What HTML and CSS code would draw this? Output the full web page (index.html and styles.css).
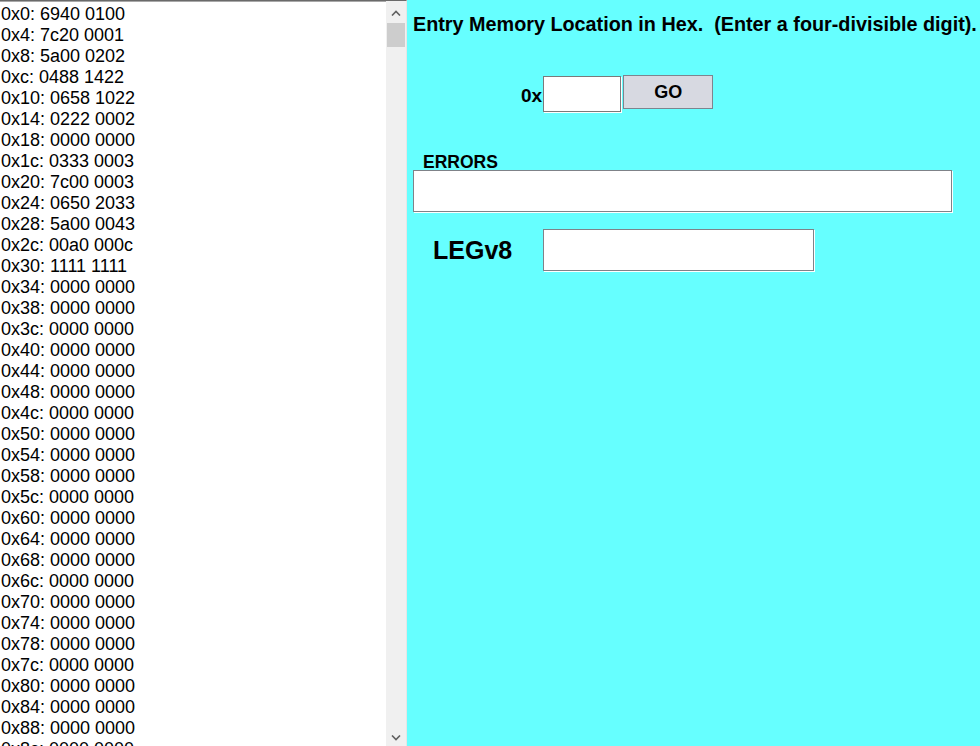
FILE: index.html
```html
<!DOCTYPE html>
<html>
<head>
<meta charset="utf-8">
<link rel="stylesheet" href="styles.css">
</head>
<body>
<div class="page">
  <div class="memory">
    <div class="mem-list">
      <div class="row">0x0: 6940 0100</div>
      <div class="row">0x4: 7c20 0001</div>
      <div class="row">0x8: 5a00 0202</div>
      <div class="row">0xc: 0488 1422</div>
      <div class="row">0x10: 0658 1022</div>
      <div class="row">0x14: 0222 0002</div>
      <div class="row">0x18: 0000 0000</div>
      <div class="row">0x1c: 0333 0003</div>
      <div class="row">0x20: 7c00 0003</div>
      <div class="row">0x24: 0650 2033</div>
      <div class="row">0x28: 5a00 0043</div>
      <div class="row">0x2c: 00a0 000c</div>
      <div class="row">0x30: 1111 1111</div>
      <div class="row">0x34: 0000 0000</div>
      <div class="row">0x38: 0000 0000</div>
      <div class="row">0x3c: 0000 0000</div>
      <div class="row">0x40: 0000 0000</div>
      <div class="row">0x44: 0000 0000</div>
      <div class="row">0x48: 0000 0000</div>
      <div class="row">0x4c: 0000 0000</div>
      <div class="row">0x50: 0000 0000</div>
      <div class="row">0x54: 0000 0000</div>
      <div class="row">0x58: 0000 0000</div>
      <div class="row">0x5c: 0000 0000</div>
      <div class="row">0x60: 0000 0000</div>
      <div class="row">0x64: 0000 0000</div>
      <div class="row">0x68: 0000 0000</div>
      <div class="row">0x6c: 0000 0000</div>
      <div class="row">0x70: 0000 0000</div>
      <div class="row">0x74: 0000 0000</div>
      <div class="row">0x78: 0000 0000</div>
      <div class="row">0x7c: 0000 0000</div>
      <div class="row">0x80: 0000 0000</div>
      <div class="row">0x84: 0000 0000</div>
      <div class="row">0x88: 0000 0000</div>
      <div class="row">0x8c: 0000 0000</div>
      <div class="row">0x90: 0000 0000</div>
    </div>
    <div class="scrollbar">
      <div class="arrow">
        <svg width="10" height="6" viewBox="0 0 10 6"><path d="M1 5.5 L5 1.5 L9 5.5" fill="none" stroke="#606060" stroke-width="1.6"/></svg>
      </div>
      <div class="thumb"></div>
      <div class="track"></div>
      <div class="arrow arrow-down">
        <svg width="10" height="6" viewBox="0 0 10 6"><path d="M1 0.5 L5 4.5 L9 0.5" fill="none" stroke="#606060" stroke-width="1.6"/></svg>
      </div>
    </div>
  </div>
  <div class="panel">
    <div class="title">Entry Memory Location in Hex.&nbsp; (Enter a four-divisible digit).</div>
    <div class="entry">
      <span class="prefix">0x</span>
      <input class="hex-input" type="text">
      <button class="go">GO</button>
    </div>
    <div class="errors-label">ERRORS</div>
    <div class="box errors-box"></div>
    <div class="leg">
      <span class="leg-label">LEGv8</span>
      <div class="box leg-box"></div>
    </div>
  </div>
</div>
</body>
</html>
```

FILE: styles.css
```css
html, body {
  margin: 0;
  padding: 0;
  background: #66ffff;
}
.page {
  display: flex;
  height: 746px;
  overflow: hidden;
  font-family: "Liberation Sans", Arial, sans-serif;
}
.memory {
  width: 406px;
  flex: none;
  display: flex;
  background: #ffffff;
  border-top: 1px solid #6a6a6a;
  box-shadow: inset 0 1px 0 #a8a8a8;
  border-right: 1px solid #e6e6e6;
  overflow: hidden;
}
.mem-list {
  flex: 1;
  padding: 3px 0 0 1px;
  overflow: hidden;
}
.row {
  font-size: 18px;
  line-height: 21px;
  height: 21px;
  color: #000;
  white-space: nowrap;
}
.scrollbar {
  width: 20px;
  flex: none;
  background: #f0f0f0;
  display: flex;
  flex-direction: column;
  padding: 1px 1px 0 1px;
  box-sizing: border-box;
}
.arrow {
  height: 21px;
  display: flex;
  align-items: center;
  justify-content: center;
  flex: none;
}
.arrow-down {
  height: 16px;
}
.thumb {
  height: 24px;
  background: #cdcdcd;
  flex: none;
}
.track {
  flex: 1;
}
.panel {
  flex: 1;
  padding: 12px 0 0 6px;
  display: flex;
  flex-direction: column;
  align-items: flex-start;
}
.title {
  font-weight: bold;
  font-size: 19.8px;
  line-height: 24px;
  white-space: nowrap;
}
.entry {
  display: flex;
  align-items: center;
  margin: 39px 0 0 108px;
}
.prefix {
  font-weight: bold;
  font-size: 19px;
  margin-top: 4px;
}
.hex-input {
  width: 78px;
  height: 36px;
  box-sizing: border-box;
  border: 1px solid #7a7a7a;
  box-shadow: 1px 1px 0 #ffffff;
  background: #fff;
  margin: 1px 0 0 1px;
  padding: 0;
}
.go {
  width: 90px;
  height: 34px;
  margin: 0 0 0 2px;
  box-sizing: border-box;
  background: #d7d9e1;
  border: 1px solid #7d848e;
  font-family: "Liberation Sans", Arial, sans-serif;
  font-weight: bold;
  font-size: 18px;
  padding: 0;
  align-self: flex-start;
  color: #000;
}
.errors-label {
  font-weight: bold;
  font-size: 17.5px;
  line-height: 16px;
  margin: 42px 0 0 10px;
}
.box {
  background: #fff;
  border: 1px solid #7f8288;
  box-shadow: 1px 1px 0 #ffffff;
  box-sizing: border-box;
}
.errors-box {
  width: 539px;
  height: 42px;
  margin-top: 0;
}
.leg {
  display: flex;
  align-items: center;
  margin: 17px 0 0 20px;
}
.leg-label {
  font-weight: bold;
  font-size: 25px;
  width: 110px;
}
.leg-box {
  width: 271px;
  height: 42px;
}
```
